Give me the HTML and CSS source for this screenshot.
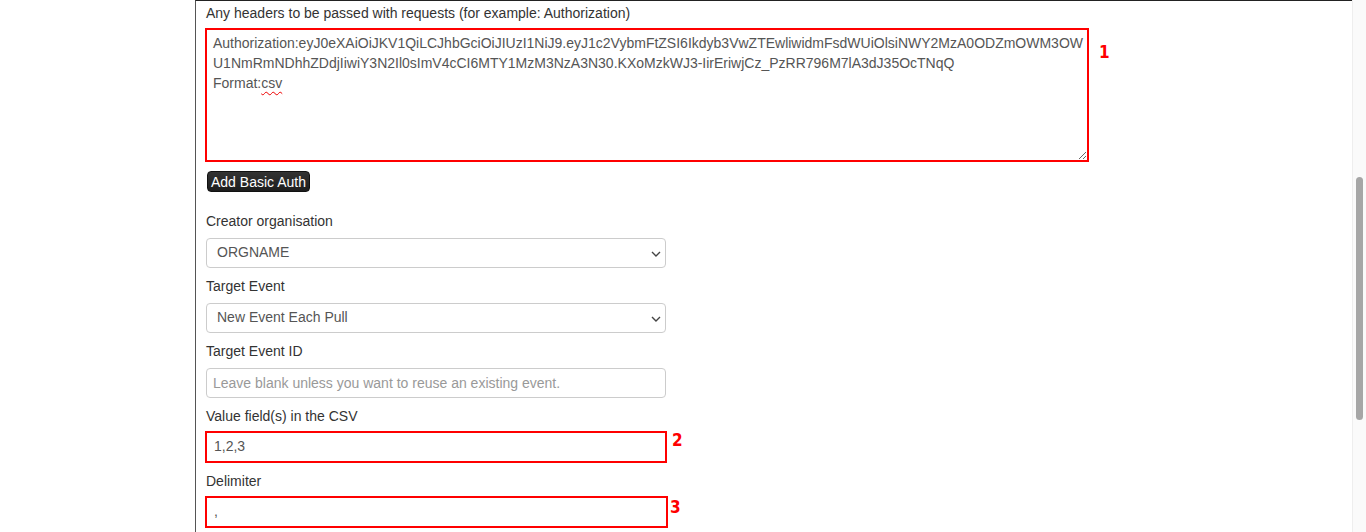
FILE: index.html
```html
<!DOCTYPE html>
<html lang="en">
<head>
    <meta charset="UTF-8">
    <title>Edit Feed</title>
    <link rel="stylesheet" href="styles.css">
</head>
<body>
    <div class="page">
        <div class="content">
            <!-- headers -->
            <label class="field-label first">Any headers to be passed with requests (for example: Authorization)</label>
            <div class="row">
                <div class="area-wrap">
                    <textarea class="headers marked" spellcheck="false"></textarea>
                    <div class="fake-text">Authorization:eyJ0eXAiOiJKV1QiLCJhbGciOiJIUzI1NiJ9.eyJ1c2VybmFtZSI6Ikdyb3VwZTEwliwidmFsdWUiOlsiNWY2MzA0ODZmOWM3OWU1NmRmNDhhZDdjIiwiY3N2Il0sImV4cCI6MTY1MzM3NzA3N30.KXoMzkWJ3-IirEriwjCz_PzRR796M7lA3dJ35OcTNqQ<br>Format:<span class="typo">csv</span></div>
                </div>
                <span class="note note-1">1</span>
            </div>
            <button class="btn-dark">Add Basic Auth</button>

            <label class="field-label">Creator organisation</label>
            <div class="select-wrap">
                <select class="input"><option>ORGNAME</option></select>
                <svg class="chev" width="10" height="6" viewBox="0 0 10 6"><path d="M1 1 L5 5 L9 1" fill="none" stroke="#444" stroke-width="1.4"/></svg>
            </div>

            <label class="field-label">Target Event</label>
            <div class="select-wrap">
                <select class="input"><option>New Event Each Pull</option></select>
                <svg class="chev" width="10" height="6" viewBox="0 0 10 6"><path d="M1 1 L5 5 L9 1" fill="none" stroke="#444" stroke-width="1.4"/></svg>
            </div>

            <label class="field-label">Target Event ID</label>
            <input class="input" type="text" placeholder="Leave blank unless you want to reuse an existing event.">

            <label class="field-label">Value field(s) in the CSV</label>
            <div class="row marked-row">
                <input class="input marked" type="text" value="1,2,3">
                <span class="note note-2">2</span>
            </div>

            <label class="field-label">Delimiter</label>
            <div class="row marked-row">
                <input class="input marked wide" type="text" value=",">
                <span class="note note-3">3</span>
            </div>
        </div>
    </div>

    <!-- scrollbar of the screenshot -->
    <div class="scrollbar"><div class="thumb"></div></div>
</body>
</html>
```

FILE: styles.css
```css
body {
    margin: 0;
    font-family: "Liberation Sans", Arial, sans-serif;
    font-size: 14px;
    color: #333;
    background: #fff;
    overflow: hidden;
}
.page {
    margin-left: 195px;
    margin-right: 13px;
    border-left: 1px solid #555;
    border-top: 1px solid #222;
    height: 600px;
}
.content {
    display: flex;
    flex-direction: column;
    align-items: flex-start;
    padding-left: 10px;
}
.field-label {
    display: block;
    line-height: 20px;
    margin-top: 8px;
    margin-bottom: 7px;
}
.field-label.first {
    margin-top: 2px;
    margin-bottom: 5px;
}
.row {
    display: flex;
    align-items: flex-start;
    margin-left: -1px;
}
.marked-row {
    margin-top: -2px;
}
.area-wrap {
    position: relative;
    width: 884px;
    height: 134px;
}
.headers {
    box-sizing: border-box;
    width: 884px;
    height: 134px;
    margin: 0;
    padding: 3px 6px;
    resize: both;
    background: #fff;
}
.fake-text {
    position: absolute;
    left: 8px;
    top: 5px;
    right: 6px;
    line-height: 20px;
    color: #555;
    word-break: break-all;
    pointer-events: none;
}
.typo {
    text-decoration: underline wavy #e00;
    text-decoration-thickness: 1px;
    text-underline-offset: 3px;
}
.note {
    font-family: "Liberation Sans Narrow", "DejaVu Sans Condensed", sans-serif;
    font-weight: bold;
    font-size: 17px;
    color: #f00;
    line-height: 1;
}
.note-1 {
    margin: 16px 0 0 10px;
}
.note-2 {
    margin: 1px 0 0 5px;
}
.note-3 {
    margin: 3px 0 0 2px;
}
.btn-dark {
    margin: 9px 0 11px 1px;
    height: 21px;
    padding: 0 3px;
    font-family: "Liberation Sans", Arial, sans-serif;
    font-size: 14px;
    line-height: 18px;
    color: #fff;
    background: linear-gradient(#333, #1d1d1d);
    border: 1px solid #111;
    border-radius: 4px;
}
.select-wrap {
    position: relative;
}
.input {
    box-sizing: border-box;
    width: 460px;
    height: 30px;
    margin: 0;
    padding: 0 10px;
    font-family: "Liberation Sans", Arial, sans-serif;
    font-size: 14px;
    color: #555;
    background: #fff;
    border: 1px solid #ccc;
    border-radius: 4px;
}
input.input {
    padding: 0 6px;
}
input.input::placeholder {
    color: #999;
}
select.input {
    appearance: none;
    -webkit-appearance: none;
    padding-bottom: 3px;
}
.marked,
input.marked {
    border: 2px solid #f00;
    border-radius: 0;
    outline: none;
}
input.marked {
    width: 462px;
    height: 32px;
    padding: 0 7px 2px;
}
input.marked.wide {
    width: 463px;
}
.chev {
    position: absolute;
    right: 5px;
    top: 13px;
}
.scrollbar {
    position: fixed;
    top: 0;
    right: 0;
    width: 13px;
    height: 532px;
    background: #fafafa;
    border-left: 1px solid #eee;
}
.thumb {
    position: absolute;
    left: 3px;
    top: 177px;
    width: 7px;
    height: 243px;
    border-radius: 4px;
    background: #a6a6a6;
}
```
